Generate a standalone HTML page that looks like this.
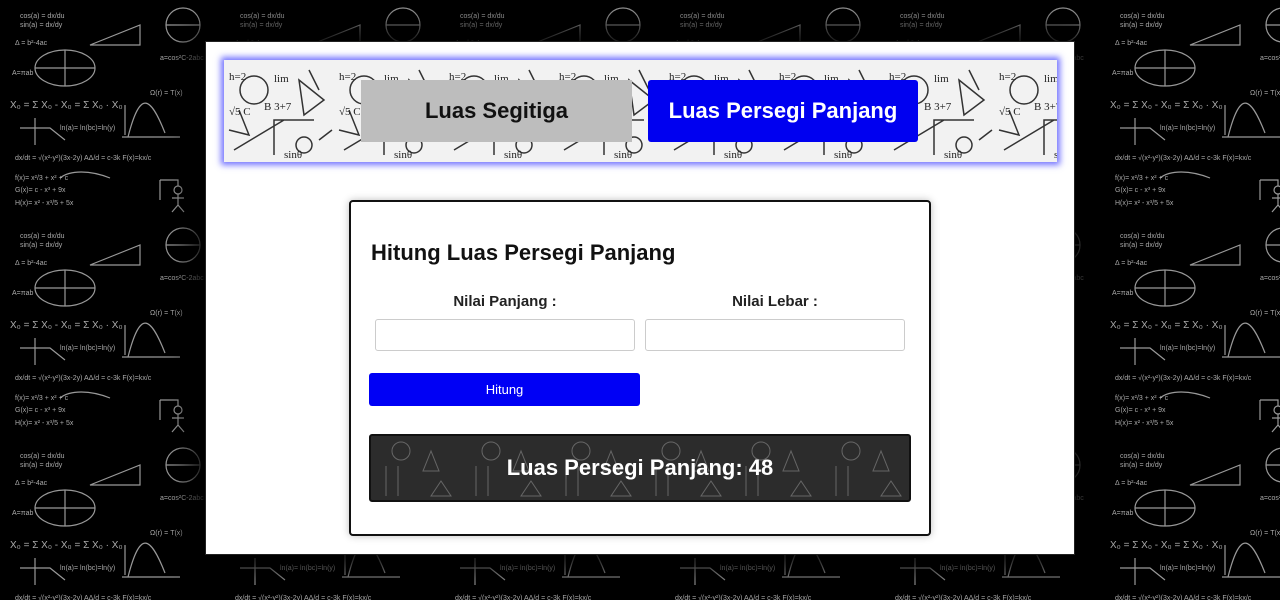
<!DOCTYPE html>
<html><head><meta charset="utf-8"><style>
*{box-sizing:border-box;margin:0;padding:0}
body{width:1280px;height:600px;overflow:hidden;background:#000;font-family:"Liberation Sans",Arial,sans-serif;position:relative}
#bg{position:absolute;left:0;top:0}
.panel{position:absolute;left:205px;top:41px;width:870px;height:514px;background:#fff;border:1px solid #222;box-shadow:0 0 25px 14px rgba(0,0,0,.95)}
.strip{position:absolute;left:224px;top:60px;width:833px;height:102px;box-shadow:0 0 6px 3px rgba(80,80,255,.8);overflow:hidden;background:#f2f2f2}
.btn{position:absolute;top:80px;height:62px;width:271px;font-weight:bold;font-size:22px;display:flex;align-items:center;justify-content:center}
.card{position:absolute;left:349px;top:200px;width:582px;height:336px;border:2px solid #111;border-radius:4px;background:#fff;box-shadow:0 0 8px rgba(0,0,0,.25)}
h1{position:absolute;left:20px;top:38px;font-size:22px;font-weight:bold;color:#111}
.lbl{position:absolute;top:91px;font-size:15px;font-weight:bold;color:#222;text-align:center;width:260px}
.inp{position:absolute;top:117px;width:260px;height:32px;border:1px solid #ccc;border-radius:3px}
.go{position:absolute;left:18px;top:171px;width:271px;height:33px;background:#0000f5;border-radius:3px;color:#fff;font-size:13px;display:flex;align-items:center;justify-content:center}
.res{position:absolute;left:18px;top:232px;width:542px;height:68px;background:#2c2c2c;border:2px solid #111;border-radius:3px;color:#fff;font-size:22px;font-weight:bold;display:flex;align-items:center;justify-content:center;overflow:hidden}
.res svg{position:absolute;left:0;top:0}
.res span{position:relative}
</style></head><body>
<svg id="bg" width="1280" height="600">
<defs><pattern id="p" width="220" height="220" patternUnits="userSpaceOnUse">
<g fill="none" stroke="#999" stroke-width="1.2">
<ellipse cx="65" cy="68" rx="30" ry="18"/><line x1="35" y1="68" x2="95" y2="68"/><line x1="65" y1="50" x2="65" y2="86"/>
<path d="M90 45 L140 25 L140 45 Z"/><circle cx="183" cy="25" r="17"/><line x1="166" y1="25" x2="200" y2="25"/>
<path d="M125 135 L125 105 M122 137 L180 137 M128 137 C140 90 150 95 165 133"/>
<path d="M20 128 L50 128 L65 140 M35 118 L35 145"/>
<path d="M160 180 L160 200 M160 180 L178 180 L178 186"/><circle cx="178" cy="190" r="4"/><path d="M178 194 L178 205 L172 212 M178 205 L184 212 M172 198 L184 198"/>
<path d="M60 178 C70 170 90 170 110 178"/></g>
<g fill="#aaa" font-size="7" font-family="Liberation Sans">
<text x="20" y="18">cos(a) = dx/du</text><text x="20" y="27">sin(a) = dx/dy</text><text x="15" y="45">Δ = b²-4ac</text><text x="12" y="75">A=πab</text>
<text x="10" y="108" font-size="10">X₀ = Σ X₀ - X₀ = Σ X₀ · X₀</text><text x="60" y="130">ln(a)= ln(bc)=ln(y)</text>
<text x="15" y="160">dx/dt = √(x²-y²)(3x-2y)   AΔ/d = c-3k  F(x)=kx/c</text>
<text x="15" y="180">f(x)= x²/3 + x² + c</text><text x="15" y="192">G(x)= c - x³ + 9x</text><text x="15" y="205">H(x)= x² - x³/5 + 5x</text>
<text x="150" y="95">Ω(r) = T(x)</text><text x="160" y="60">a=cos²C-2abc</text></g>
</pattern></defs>
<rect width="1280" height="600" fill="url(#p)"/>
</svg>
<div class="panel"></div>
<div class="strip"><svg width="833" height="102"><defs><pattern id="q" width="110" height="102" patternUnits="userSpaceOnUse"><g fill="none" stroke="#333" stroke-width="1.5"><circle cx="30" cy="30" r="14"/><path d="M10 90 L60 60 M50 95 L50 60 L90 60 M75 20 L100 40 L80 55 Z M95 80 L108 70 M85 10 L95 30 M5 70 L25 75 L15 50"/><circle cx="80" cy="85" r="8"/></g><g fill="#222" font-size="11" font-family="Liberation Serif"><text x="5" y="55">√5 C</text><text x="50" y="22">lim</text><text x="40" y="50">B 3+7</text><text x="60" y="98">sinθ</text><text x="5" y="20">h=2</text></g></pattern></defs><rect width="833" height="102" fill="url(#q)"/></svg></div>
<div class="btn" style="left:361px;background:#bdbdbd;color:#111">Luas Segitiga</div>
<div class="btn" style="left:648px;width:270px;background:#0000f0;color:#fff;border-radius:3px">Luas Persegi Panjang</div>
<div class="card">
<h1>Hitung Luas Persegi Panjang</h1>
<div class="lbl" style="left:24px">Nilai Panjang :</div>
<div class="lbl" style="left:294px">Nilai Lebar :</div>
<div class="inp" style="left:24px"></div>
<div class="inp" style="left:294px"></div>
<div class="go">Hitung</div>
<div class="res"><svg width="542" height="68"><defs><pattern id="r" width="90" height="68" patternUnits="userSpaceOnUse"><g fill="none" stroke="#666" stroke-width="1"><circle cx="30" cy="15" r="9"/><path d="M60 15 L52 35 L68 35 Z M15 30 L15 60 M27 30 L27 60 M70 45 L80 60 L60 60 Z"/></g></pattern></defs><rect width="542" height="68" fill="url(#r)"/></svg><span>Luas Persegi Panjang: 48</span></div>
</div>
</body></html>
